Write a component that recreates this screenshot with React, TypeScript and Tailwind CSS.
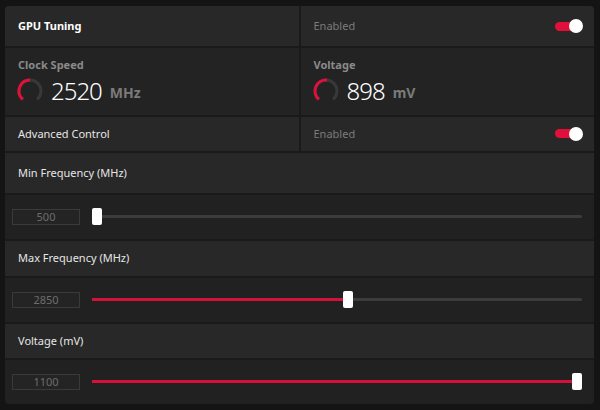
import React from "react";

const FONT = { fontFamily: '"Noto Sans", "Open Sans", sans-serif' };

function polar(cx: number, cy: number, r: number, deg: number) {
  const a = ((deg - 90) * Math.PI) / 180;
  return [cx + r * Math.cos(a), cy + r * Math.sin(a)];
}

function arc(cx: number, cy: number, r: number, from: number, to: number) {
  const [x1, y1] = polar(cx, cy, r, from);
  const [x2, y2] = polar(cx, cy, r, to);
  const large = to - from > 180 ? 1 : 0;
  return `M ${x1} ${y1} A ${r} ${r} 0 ${large} 1 ${x2} ${y2}`;
}

function Gauge({ fraction }: { fraction: number }) {
  const start = -140;
  const end = 140;
  const mid = start + (end - start) * fraction;
  return (
    <svg width="28" height="28" viewBox="0 0 28 28" className="shrink-0">
      <path d={arc(14, 14, 11, start, end)} fill="none" stroke="#383838" strokeWidth="3" />
      <path d={arc(14, 14, 11, start, mid)} fill="none" stroke="#e0103a" strokeWidth="3" />
    </svg>
  );
}

function Toggle() {
  return (
    <div className="relative w-[28px] h-[14px] flex items-center">
      <div className="h-[9px] w-[24px] rounded-full bg-[#e0103a]" />
      <div className="absolute right-0 top-0 h-[14px] w-[14px] rounded-full bg-white" />
    </div>
  );
}

function ToggleRow({ label, bold, height }: { label: string; bold?: boolean; height: string }) {
  return (
    <div className={`grid grid-cols-2 gap-[2px] ${height}`}>
      <div className="bg-[#282828] flex items-center pl-[13px]">
        <span className={bold ? "text-[11px] font-bold text-white" : "text-[11px] text-[#e6e6e6]"}>{label}</span>
      </div>
      <div className="bg-[#282828] flex items-center justify-between pl-[13px] pr-[11px]">
        <span className="text-[11px] text-[#7b7b7b]">Enabled</span>
        <Toggle />
      </div>
    </div>
  );
}

function Stat({ title, value, unit, fraction }: { title: string; value: string; unit: string; fraction: number }) {
  return (
    <div className="bg-[#232323] flex flex-col pl-[11px] pt-[9px]">
      <span className="text-[11px] font-bold text-[#8a8a8a] pl-[2px]">{title}</span>
      <div className="flex items-center mt-[3px]">
        <Gauge fraction={fraction} />
        <span className="text-[24px] leading-none text-white ml-[7px] font-light tracking-[-1px]">{value}</span>
        <span className="text-[14px] font-bold text-[#7b7b7b] ml-[8px] mt-[4px]">{unit}</span>
      </div>
    </div>
  );
}

function SliderBlock({ label, value, fraction, labelH }: { label: string; value: string; fraction: number; labelH: string }) {
  return (
    <>
      <div className={`bg-[#282828] flex items-center pl-[13px] ${labelH}`}>
        <span className="text-[11px] text-[#e6e6e6]">{label}</span>
      </div>
      <div className="bg-[#212121] h-[45px] flex items-center pl-[7px] pr-[12px]">
        <div className="w-[68px] h-[16px] border border-[#3a3a3a] bg-[#242424] flex items-center justify-center text-[11px] text-[#6d6d6d]">
          {value}
        </div>
        <div className="relative flex-1 ml-[12px] h-[17px] flex items-center">
          <div className="h-[3px] w-full bg-[#3c3c3c] rounded-full" />
          <div
            className="absolute left-0 h-[3px] bg-[#d5103b]"
            style={{ width: `calc(${fraction} * (100% - 10px) + 5px)` }}
          />
          <div
            className="absolute top-0 h-[17px] w-[10px] rounded-[2px] bg-white"
            style={{ left: `calc(${fraction} * (100% - 10px))` }}
          />
        </div>
      </div>
    </>
  );
}

export default function App() {
  return (
    <div className="w-[600px] h-[410px] bg-[#141414] pt-[6px] pl-[5px] pr-[6px]" style={FONT}>
      <div className="rounded-[4px] overflow-hidden bg-[#1a1a1a] flex flex-col gap-[2px] h-[398px]">
        <ToggleRow label="GPU Tuning" bold height="h-[41px]" />
        <div className="h-[67px] grid grid-cols-2 gap-[2px]">
          <Stat title="Clock Speed" value="2520" unit="MHz" fraction={0.5} />
          <Stat title="Voltage" value="898" unit="mV" fraction={0.52} />
        </div>
        <ToggleRow label="Advanced Control" height="h-[35px]" />
        <SliderBlock label="Min Frequency (MHz)" value="500" fraction={0} labelH="h-[40px]" />
        <SliderBlock label="Max Frequency (MHz)" value="2850" fraction={0.522} labelH="h-[35px]" />
        <SliderBlock label="Voltage (mV)" value="1100" fraction={1} labelH="h-[34px]" />
      </div>
    </div>
  );
}
